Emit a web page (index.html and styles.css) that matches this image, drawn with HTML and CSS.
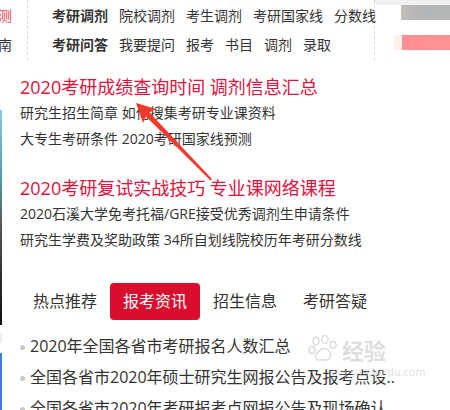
FILE: index.html
```html
<!DOCTYPE html>
<html lang="zh-CN">
<head>
    <meta charset="UTF-8">
    <meta name="viewport" content="width=device-width, initial-scale=1.0">
    <title>考研资讯</title>
    <link rel="stylesheet" href="styles.css">
</head>
<body>
    <div class="page">
        <div class="top">
            <div class="side-words">
                <span class="hot">预测</span>
                <span>指南</span>
            </div>
            <div class="nav">
                <div class="nav-row">
                    <a class="nav-title">考研调剂</a>
                    <a>院校调剂</a>
                    <a>考生调剂</a>
                    <a>考研国家线</a>
                    <a>分数线</a>
                </div>
                <div class="nav-row">
                    <a class="nav-title">考研问答</a>
                    <a>我要提问</a>
                    <a>报考</a>
                    <a>书目</a>
                    <a>调剂</a>
                    <a>录取</a>
                </div>
            </div>
            <div class="side-ads">
                <div class="ad-gray"></div>
                <div class="ad-pink"></div>
            </div>
        </div>

        <div class="body-row">
            <div class="sliver">
                <div class="sliver-photo"></div>
                <div class="sliver-gray"></div>
                <div class="sliver-blue"></div>
            </div>

            <div class="main">
                <div class="news-block">
                    <a class="headline">2020考研成绩查询时间 调剂信息汇总</a>
                    <a class="sub">研究生招生简章 如何搜集考研专业课资料</a>
                    <a class="sub">大专生考研条件 2020考研国家线预测</a>
                </div>
                <div class="news-block second">
                    <a class="headline">2020考研复试实战技巧 专业课网络课程</a>
                    <a class="sub">2020石溪大学免考托福/GRE接受优秀调剂生申请条件</a>
                    <a class="sub">研究生学费及奖助政策 34所自划线院校历年考研分数线</a>
                </div>

                <div class="tabs">
                    <span class="tab">热点推荐</span>
                    <span class="tab active">报考资讯</span>
                    <span class="tab">招生信息</span>
                    <span class="tab">考研答疑</span>
                </div>

                <ul class="list">
                    <li>2020年全国各省市考研报名人数汇总</li>
                    <li>全国各省市2020年硕士研究生网报公告及报考点设..</li>
                    <li>全国各省市2020年考研报考点网报公告及现场确认</li>
                </ul>
            </div>
        </div>

        <!-- 截图上的红色箭头标注 -->
        <svg class="arrow" width="450" height="410" viewBox="0 0 450 410">
            <polygon points="136,103 156,109 149.5,112.5 212,179 210.5,180.5 146,116.5 143,123" fill="#f23a2c"/>
        </svg>

        <div class="watermark">
            <svg width="30" height="28" viewBox="0 0 30 28">
                <g fill="none" stroke="#dcdcdc" stroke-width="1.5">
                    <ellipse cx="8" cy="6" rx="3" ry="4"/>
                    <ellipse cx="17" cy="4.5" rx="3" ry="4"/>
                    <ellipse cx="25" cy="10" rx="3" ry="3.5"/>
                    <ellipse cx="4" cy="15" rx="3" ry="3.5"/>
                    <path d="M10 25 C6 25 7 18 14 14 C20 12 24 18 22 23 C20 27 14 24 10 25 Z"/>
                </g>
            </svg>
            <span class="wm-text">经验</span>
            <div class="wm-url">jingyan.baidu.com</div>
        </div>
    </div>
</body>
</html>
```

FILE: styles.css
```css
* {
    box-sizing: border-box;
}
body {
    margin: 0;
    font-family: "Open Sans", "Noto Sans CJK SC", sans-serif;
    color: #333;
    background-color: white;
}
a {
    color: inherit;
    text-decoration: none;
}
.page {
    position: relative;
    width: 450px;
    height: 410px;
    overflow: hidden;
}

/* 顶部导航 */
.top {
    display: flex;
    height: 60px;
}
.side-words {
    width: 27px;
    overflow: hidden;
    display: flex;
    flex-direction: column;
    align-items: flex-end;
    padding-top: 1px;
    padding-right: 15px;
    font-size: 14px;
    line-height: 29px;
    white-space: nowrap;
}
.side-words span {
    display: block;
}
.side-words .hot {
    color: #f2455a;
}
.nav {
    width: 348px;
    border-left: 1px dashed #dcdcdc;
    border-right: 1px dashed #dcdcdc;
    padding: 1px 0 0 24px;
}
.nav-row {
    display: flex;
    gap: 11px;
    font-size: 14px;
    line-height: 29px;
    white-space: nowrap;
}
.nav-title {
    font-weight: bold;
}
.side-ads {
    flex: 1;
    padding-top: 5px;
    background: linear-gradient(to bottom, #f0f0f0 0, #f0f0f0 5px, transparent 5px);
}
.ad-gray {
    height: 15px;
    margin-left: 26px;
    background: linear-gradient(to right, #c2bebb, #b4b5b7 40%, #b5b6b6);
}
.ad-pink {
    height: 15px;
    margin-top: 15px;
    margin-left: 19px;
    background: linear-gradient(to right, #fdf1ec 0, #fdf1ec 8px, #ff8e90 8px, #ff9393);
}

/* 主体 */
.body-row {
    display: flex;
}
.sliver {
    width: 2px;
    padding-top: 50px;
}
.sliver-photo {
    height: 215px;
    background: linear-gradient(to bottom, #7fcde0, #4f9fb5 30%, #5a5550 55%, #2a2a2c 80%, #111);
}
.sliver-gray {
    height: 10px;
    margin-top: 8px;
    background-color: #ececec;
}
.sliver-blue {
    height: 60px;
    margin-top: 10px;
    background-color: #3b7de8;
}
.main {
    flex: 1;
    padding-left: 18px;
}
.news-block {
    margin-top: 14px;
}
.news-block.second {
    margin-top: 23px;
}
.headline {
    display: block;
    font-size: 18px;
    line-height: 26px;
    color: #e0113c;
    white-space: nowrap;
}
.sub {
    display: block;
    font-size: 14px;
    line-height: 26px;
    white-space: nowrap;
}

.tabs {
    display: flex;
    margin-top: 30px;
}
.tab {
    width: 90px;
    height: 37px;
    line-height: 37px;
    text-align: center;
    font-size: 16px;
    border-radius: 4px;
}
.tab.active {
    background-color: #d90d2e;
    color: white;
}

.list {
    list-style: none;
    margin: 11px 0 0;
    padding: 0;
}
.list li {
    position: relative;
    padding-left: 10px;
    font-size: 16px;
    line-height: 31px;
    white-space: nowrap;
}
.list li::before {
    content: "";
    position: absolute;
    left: 0;
    top: 14px;
    width: 5px;
    height: 5px;
    border-radius: 50%;
    background-color: #c8c8c8;
}

/* 标注与水印 */
.arrow {
    position: absolute;
    left: 0;
    top: 0;
    pointer-events: none;
}
.watermark {
    position: absolute;
    left: 308px;
    top: 333px;
    display: flex;
    flex-wrap: wrap;
    align-items: center;
    width: 130px;
    color: rgba(200, 200, 200, 0.6);
}
.wm-text {
    font-size: 22px;
    font-weight: bold;
    margin-left: 4px;
}
.wm-url {
    width: 100%;
    padding-left: 24px;
    font-size: 11px;
    line-height: 14px;
}
```
